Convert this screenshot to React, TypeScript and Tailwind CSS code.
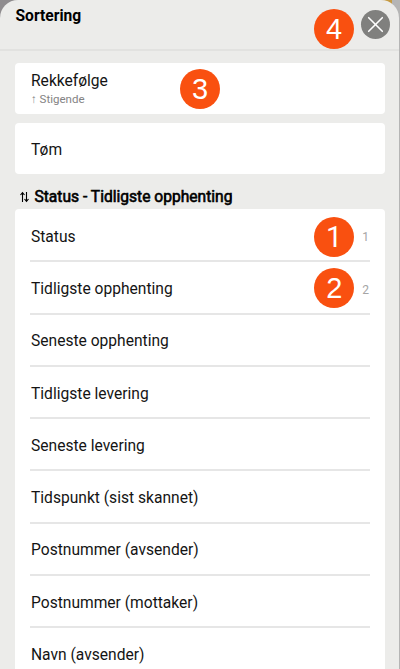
import type { ReactNode } from 'react';

const sortFields = [
  { label: 'Status', order: 1 },
  { label: 'Tidligste opphenting', order: 2 },
  { label: 'Seneste opphenting' },
  { label: 'Tidligste levering' },
  { label: 'Seneste levering' },
  { label: 'Tidspunkt (sist skannet)' },
  { label: 'Postnummer (avsender)' },
  { label: 'Postnummer (mottaker)' },
  { label: 'Navn (avsender)' },
];

/**
 * Sort sheet with numbered markers on the controls.
 */
export default function App() {
  return (
    <div className="h-[669px] w-[400px] overflow-hidden bg-[linear-gradient(90deg,#8f8c8e_0_50%,#c59a42_50%_98%,#b5b5b5_98%)] font-['Roboto',sans-serif] text-[15.6px] text-[#141414]">
      <div className="mr-px h-full overflow-hidden rounded-t-[18px] bg-[#ececea]">
        <header className="flex h-[50.5px] items-start border-b-2 border-[#e2e2e0] pl-[15.5px] pr-[9.5px]">
          <h1 className="flex-1 pt-[6px] text-[15.6px] font-bold leading-[21px] text-black">Sortering</h1>
          <Marker className="mr-[6.5px] mt-[9px] font-['Liberation_Sans',sans-serif]">4</Marker>
          <button aria-label="Lukk" className="mt-[10px] size-[29px] rounded-full bg-[#80807e]">
            <svg viewBox="0 0 29 29" className="size-full" fill="none" stroke="white" strokeWidth="1.6" strokeLinecap="round">
              <path d="M7.7 7.7 21.3 21.3M21.3 7.7 7.7 21.3" />
            </svg>
          </button>
        </header>

        <main className="px-[15px] pr-[14px] pt-[12.5px]">
          <section className="flex h-[51px] items-center justify-between rounded-[4px] bg-white pl-4 pr-[165px]">
            <div className="pt-px">
              <p className="leading-[21px]">Rekkefølge</p>
              <p className="text-[11.5px] leading-[15px] text-[#838383]">↑ Stigende</p>
            </div>
            <Marker className="mt-px font-['Liberation_Sans',sans-serif]">3</Marker>
          </section>

          <section className="mt-[9.25px] flex h-[51px] items-center rounded-[4px] bg-white pl-4 pt-[3px]">
            Tøm
          </section>

          <h2 className="flex h-[35px] items-center gap-[5.5px] pl-[5px] pt-[11px] text-[15.6px] font-normal text-black [-webkit-text-stroke:0.6px_black]">
            <svg viewBox="0 0 9 12" className="h-3 w-[9px]" fill="none" stroke="currentColor" strokeWidth="1.1">
              <path d="M2.5 11V1.8M.5 4 2.5 1.7 4.5 4M6.5 1v9.2M4.5 8l2 2.3 2-2.3" />
            </svg>
            Status - Tidligste opphenting
          </h2>

          <ul className="rounded-t-[4px] bg-white px-[15px]">
            {sortFields.map(({ label, order }) => (
              <li
                key={label}
                className="flex h-[52.25px] items-center border-b-2 border-[#e6e6e6] pl-px pr-px pt-[5px] first:h-[53px]"
              >
                <span className="flex-1">{label}</span>
                {order === 1 && <Marker className="font-['Roboto',sans-serif]">1</Marker>}
                {order === 2 && <Marker className="-mt-[4px] font-['Liberation_Sans',sans-serif]">2</Marker>}
                {order && <span className="ml-2 text-[12px] text-[#a5a5a5]">{order}</span>}
              </li>
            ))}
          </ul>
        </main>
      </div>
    </div>
  );
}

function Marker({ className, children }: { className: string; children: ReactNode }) {
  return (
    <span
      className={`flex size-10 shrink-0 items-center justify-center rounded-full bg-[#f95010] pt-px text-[29px] leading-none text-white ${className}`}
    >
      {children}
    </span>
  );
}
